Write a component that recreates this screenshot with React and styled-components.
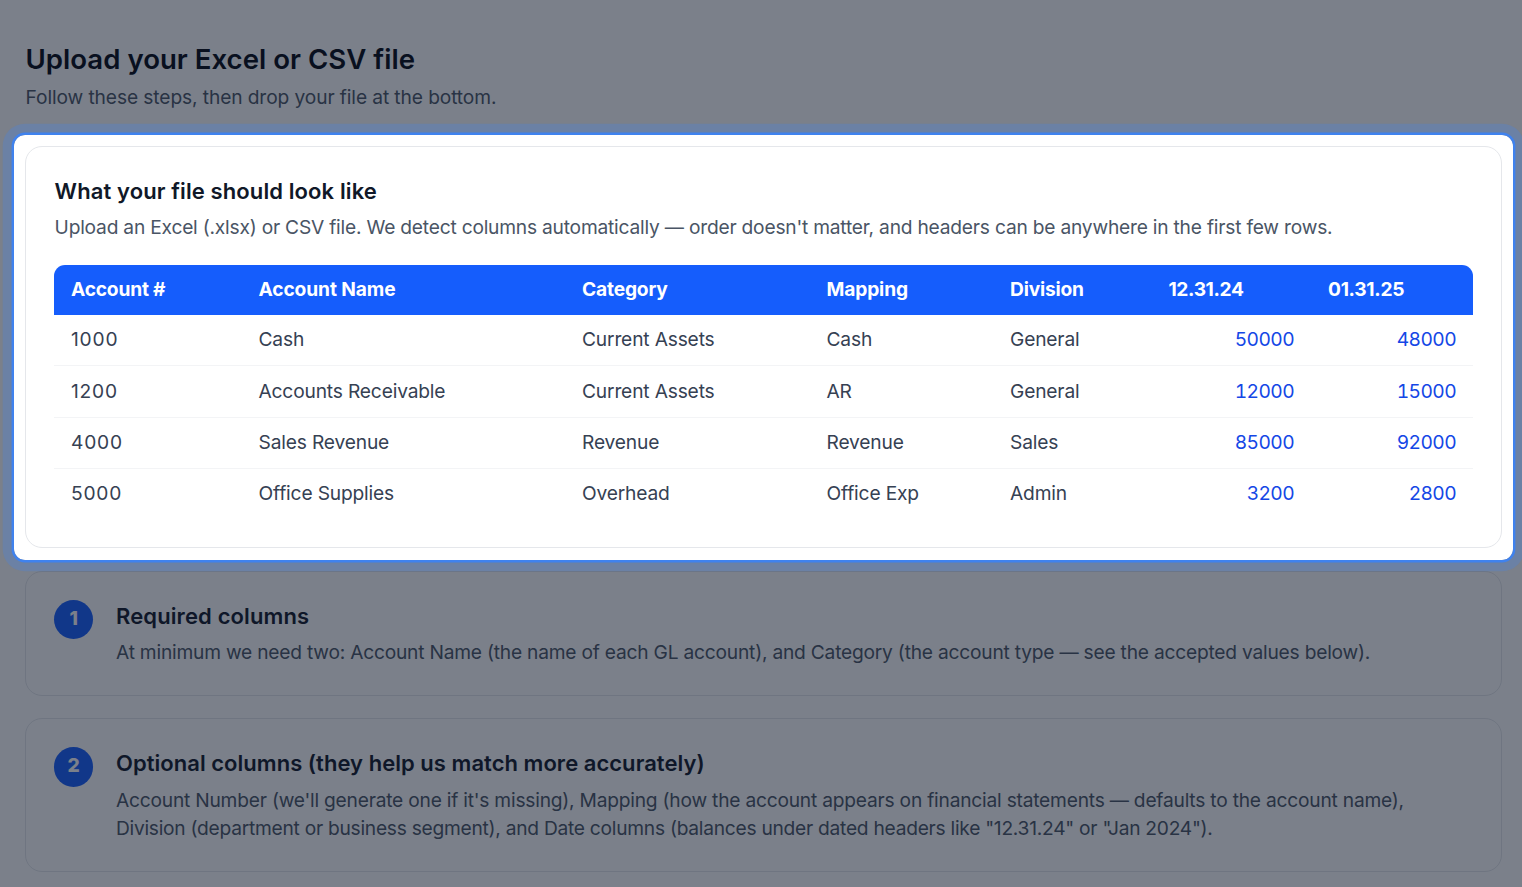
import React from 'react';
import styled, { createGlobalStyle } from 'styled-components';

const columns = [
  { label: 'Account #', spacing: -0.2 },
  { label: 'Account Name', spacing: -0.12 },
  { label: 'Category', spacing: -0.18 },
  { label: 'Mapping', spacing: -0.15 },
  { label: 'Division', spacing: -0.2 },
  { label: '12.31.24', spacing: -0.4 },
  { label: '01.31.25', spacing: -0.3 },
];

const rows = [
  ['1000', 'Cash', 'Current Assets', 'Cash', 'General', '50000', '48000'],
  ['1200', 'Accounts Receivable', 'Current Assets', 'AR', 'General', '12000', '15000'],
  ['4000', 'Sales Revenue', 'Revenue', 'Revenue', 'Sales', '85000', '92000'],
  ['5000', 'Office Supplies', 'Overhead', 'Office Exp', 'Admin', '3200', '2800'],
];

const App = () => {
  return (
    <>
      <GlobalStyle />
      <Page>
        <Title>Upload your Excel or CSV file</Title>
        <Text $spacing={-0.11}>Follow these steps, then drop your file at the bottom.</Text>

        <ExampleCard>
          <CardTitle $spacing={0.11}>What your file should look like</CardTitle>
          <Text $spacing={-0.215}>
            Upload an Excel (.xlsx) or CSV file. We detect columns automatically — order doesn't matter, and headers can be anywhere in the first few rows.
          </Text>
          <Table>
            <HeaderRow>
              {columns.map((column) => (
                <HeaderCell key={column.label} $spacing={column.spacing}>{column.label}</HeaderCell>
              ))}
            </HeaderRow>
            {rows.map((row) => (
              <Row key={row[0]}>
                {row.map((value, i) => (
                  <Cell key={i} $amount={i > 4} $code={i === 0}>{value}</Cell>
                ))}
              </Row>
            ))}
          </Table>
        </ExampleCard>

        <StepCard>
          <Badge>1</Badge>
          <StepBody>
            <CardTitle $spacing={0.12}>Required columns</CardTitle>
            <Text $spacing={-0.219}>
              At minimum we need two: Account Name (the name of each GL account), and Category (the account type — see the accepted values below).
            </Text>
          </StepBody>
        </StepCard>

        <StepCard>
          <Badge>2</Badge>
          <StepBody>
            <CardTitle $spacing={0.035}>Optional columns (they help us match more accurately)</CardTitle>
            <Text $spacing={-0.219}>
              Account Number (we'll generate one if it's missing), Mapping (how the account appears on financial statements — defaults to the account name),
            </Text>
            <Text $spacing={-0.262} $flush>
              Division (department or business segment), and Date columns (balances under dated headers like "12.31.24" or "Jan 2024").
            </Text>
          </StepBody>
        </StepCard>
      </Page>
    </>
  );
};

const GlobalStyle = createGlobalStyle`
  * {
    box-sizing: border-box;
  }

  body {
    margin: 0;
    background: #fff;
    font-family: Inter, sans-serif;
    font-size: 19.2px;
    line-height: 28px;
  }
`;

const Page = styled.main`
  height: 887px;
  padding: 41px 20px 0 25px;
  overflow: hidden;
`;

const Title = styled.h1`
  margin: 0 0 -2.4px;
  padding-left: 0.5px;
  color: #030712;
  font-size: 27.6px;
  font-weight: 600;
  line-height: 36px;
  letter-spacing: 0.01px;
`;

const CardTitle = styled.h2`
  margin: 0;
  padding-left: 0.6px;
  color: #101828;
  font-size: 22px;
  font-weight: 600;
  line-height: 28px;
  letter-spacing: ${(props) => props.$spacing}px;
`;

const Text = styled.p`
  margin: ${(props) => (props.$flush ? '0' : '8.4px 0 0')};
  padding-left: 0.6px;
  color: #4a5565;
  white-space: nowrap;
  letter-spacing: ${(props) => props.$spacing}px;
`;

const Card = styled.section`
  width: 1477px;
  border: 1px solid #e5e7eb;
  border-radius: 17px;
`;

const ExampleCard = styled(Card)`
  position: relative;
  height: 402px;
  margin: 35px 0 23px;
  padding: 30px 28px 0;

  /* spotlight ring, with the rest of the page dimmed around it */
  &::after {
    content: '';
    position: absolute;
    inset: -12.3px -12px -12.8px;
    border-radius: 11px;
    box-shadow:
      0 0 0 2.4px rgba(59, 130, 246, 0.9),
      0 0 0 11.3px rgba(59, 130, 246, 0.25),
      0 0 0 9999px rgba(15, 23, 42, 0.55);
    pointer-events: none;
  }
`;

const Table = styled.div`
  width: 1419px;
  margin-top: 23.6px;
  border-radius: 11px 11px 0 0;
  overflow: hidden;
`;

const Row = styled.div`
  display: grid;
  grid-template-columns: 187.5px 323.5px 244.5px 183.5px 158.5px 159.5px 162px;
  height: 51.4px;
  padding-top: 10.2px;
  border-bottom: 1px solid #f3f4f6;

  &:last-child {
    border-bottom: none;
  }
`;

const HeaderRow = styled(Row)`
  height: 50px;
  padding-top: 10px;
  border-bottom: none;
  background: #155dfc;
`;

const HeaderCell = styled.div`
  padding: 0 17px;
  color: #fff;
  font-weight: 700;
  letter-spacing: ${(props) => props.$spacing}px;
`;

const Cell = styled.div`
  padding: 0 17px;
  color: ${(props) => (props.$amount ? '#1447e6' : '#364153')};
  text-align: ${(props) => (props.$amount ? 'right' : 'left')};
  font-variant-numeric: ${(props) => (props.$amount ? 'tabular-nums' : 'normal')};
  letter-spacing: ${(props) => (props.$code ? '0.8px' : props.$amount ? '-0.6px' : '-0.17px')};
`;

const StepCard = styled(Card)`
  display: flex;
  gap: 22px;
  margin-bottom: 22px;
  padding: 28px 28px 29px;
`;

const Badge = styled.div`
  display: flex;
  flex-shrink: 0;
  justify-content: center;
  width: 39.4px;
  height: 39.4px;
  padding-top: 4px;
  border-radius: 50%;
  background: #155dfc;
  color: #fff;
  font-weight: 800;
`;

const StepBody = styled.div`
  padding-top: 2px;
`;

export default App;
